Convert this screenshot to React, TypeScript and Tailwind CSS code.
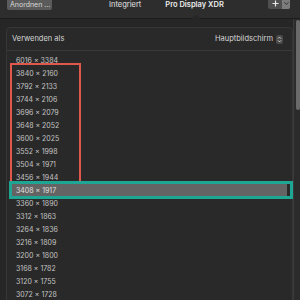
import { ChevronDown } from "lucide-react";

const rows = [
  "6016 × 3384",
  "3840 × 2160",
  "3792 × 2133",
  "3744 × 2106",
  "3696 × 2079",
  "3648 × 2052",
  "3600 × 2025",
  "3552 × 1998",
  "3504 × 1971",
  "3456 × 1944",
  "3408 × 1917",
  "3360 × 1890",
  "3312 × 1863",
  "3264 × 1836",
  "3216 × 1809",
  "3200 × 1800",
  "3168 × 1782",
  "3120 × 1755",
  "3072 × 1728",
];

export default function App() {
  return (
    <div
      className="relative w-[300px] h-[300px] overflow-hidden bg-[#262626] text-[#cfcfcf]"
      style={{ fontFamily: "Inter, 'Liberation Sans', sans-serif" }}
    >
      {/* toolbar */}
      <div className="relative h-[19px] bg-[#2d2d2d] border-b border-[#1c1c1c] flex items-start">
        <div className="ml-[7px] mt-[-3px] w-[45px] h-[13px] pt-[3px] rounded-[2px] bg-[#5b5b5b] text-[7px] leading-[10px] text-[#d8d8d8] pl-[3px]">
          Anordnen ...
        </div>
        <div className="ml-[57px] text-[7.5px] leading-[10px] text-[#e4e4e4]">Integriert</div>
        <div className="ml-[24px] text-[7.5px] leading-[10px] font-semibold text-[#ececec]">Pro Display XDR</div>
        <div className="ml-auto mr-[10px] mt-[-3px] h-[12px] flex rounded-[2px] bg-[#4f4f4f] overflow-hidden">
          <div className="w-[14px] pt-[3px] flex justify-center">
            <svg width="7" height="7" viewBox="0 0 7 7">
              <path d="M3.5 0.5v6M0.5 3.5h6" stroke="#e8e8e8" strokeWidth="1.2" />
            </svg>
          </div>
          <div className="w-[8px] pt-[3px] bg-[#7c7c7c] flex justify-center">
            <ChevronDown size={7} strokeWidth={3} className="text-[#2a2a2a]" />
          </div>
        </div>
        {/* selected tab arrow */}
        <div className="absolute left-[191px] bottom-[-1px] w-0 h-0 border-l-[5px] border-r-[5px] border-b-[4px] border-l-transparent border-r-transparent border-b-[#262626]" />
      </div>

      <div className="flex">
        {/* panel */}
        <div className="mt-[8px] ml-[6px] w-[287px] h-[300px] rounded-t-[4px] border border-[#363636] bg-[#292929]">
          <div className="h-[23px] flex items-center pl-[5px] pr-[9px] border-b border-[#3a3a3a] text-[7.5px] text-[#d6d6d6]">
            <span>Verwenden als</span>
            <span className="ml-auto">Hauptbildschirm</span>
            <span className="ml-[3px] w-[7px] h-[9px] rounded-[2px] bg-[#4a4a4a] flex items-center justify-center">
              <svg width="5" height="7" viewBox="0 0 5 7">
                <path d="M1 2.6L2.5 1.1L4 2.6M1 4.4L2.5 5.9L4 4.4" stroke="#dddddd" strokeWidth="0.9" fill="none" />
              </svg>
            </span>
          </div>
          <div className="pt-[3px]">
            {rows.map((r, i) => (
              <div
                key={r}
                className={
                  i === 10
                    ? "h-[13px] mx-[5px] pl-[4px] bg-[#646464] text-[7px] leading-[13px] text-[#e0e0e0]"
                    : "h-[13px] mx-[5px] pl-[4px] text-[7px] leading-[13px] text-[#c4c4c4]"
                }
              >
                {r}
              </div>
            ))}
          </div>
        </div>
        {/* scrollbar */}
        <div className="ml-auto w-[7px] h-[281px] bg-[#2b2b2b] border-l border-[#3a3a3a] pt-[1px] pl-[2px]">
          <div className="w-[4px] h-[90px] rounded-full bg-[#6a6a6a]" />
        </div>
      </div>

      {/* annotation boxes */}
      <div className="absolute left-[10px] top-[63px] w-[71px] h-[120px] border-2 border-[#e0574b]" />
      <div className="absolute left-[9px] top-[181px] w-[284px] h-[18px] border-[3px] border-[#1fa594]" />
    </div>
  );
}
